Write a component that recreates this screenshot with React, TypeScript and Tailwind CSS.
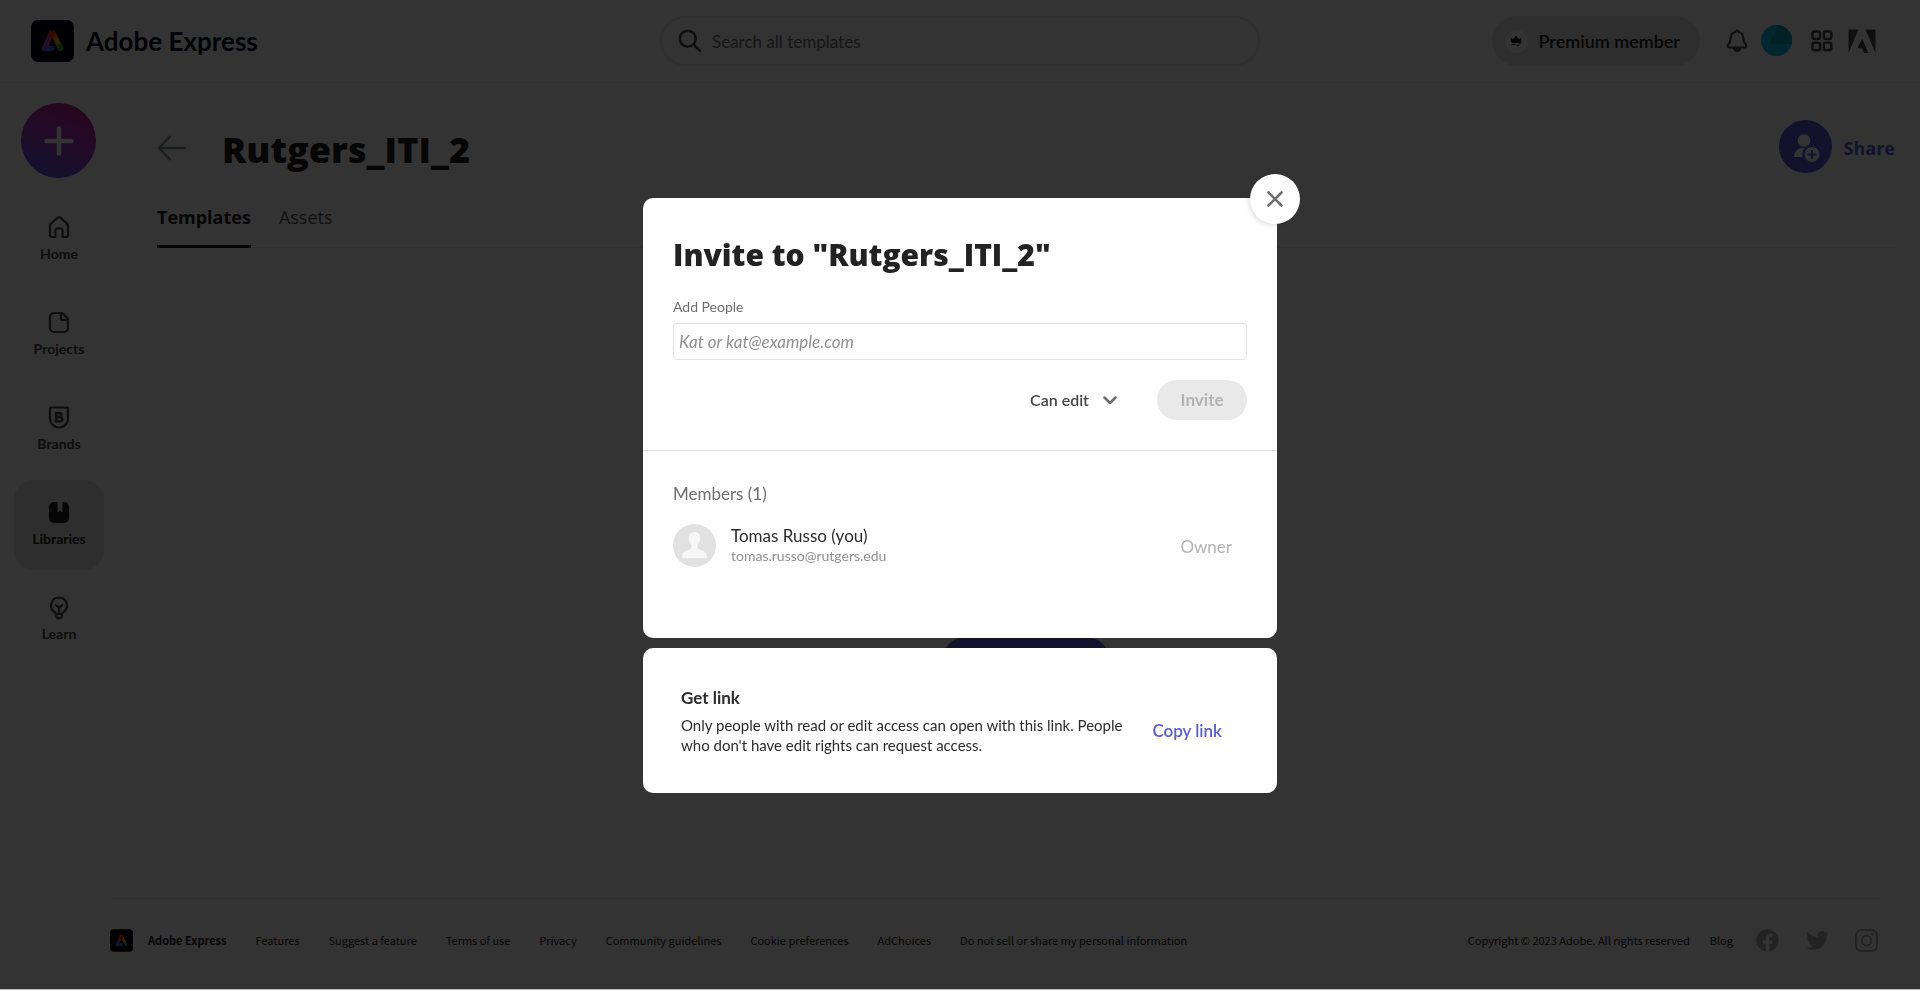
import type { ReactNode } from "react";
import { FaFacebook, FaTwitter } from "react-icons/fa";

const BODY = "font-[Lato,'Noto_Sans',sans-serif]";

function ExpressLogo({ className, id }: { className: string; id: string }) {
  return (
    <svg viewBox="0 0 43 42" className={className} aria-hidden="true">
      <defs>
        <linearGradient id={`${id}-left`} x1="0.7" y1="0" x2="0.2" y2="1">
          <stop offset="0" stopColor="#ff2a00" />
          <stop offset="0.4" stopColor="#d83bb0" />
          <stop offset="1" stopColor="#9a4dff" />
        </linearGradient>
        <linearGradient id={`${id}-right`} x1="0" y1="0" x2="0.3" y2="1">
          <stop offset="0" stopColor="#f01a00" />
          <stop offset="0.5" stopColor="#ffa000" />
          <stop offset="0.75" stopColor="#d8d000" />
          <stop offset="1" stopColor="#1fb53a" />
        </linearGradient>
        <linearGradient id={`${id}-foot`} x1="0" y1="0" x2="1" y2="0">
          <stop offset="0" stopColor="#8a4ff0" />
          <stop offset="1" stopColor="#1b6fe8" />
        </linearGradient>
      </defs>
      <rect width="43" height="42" rx="7" fill="#00020f" />
      <path d="M13.6 28.6 20.6 12.4" stroke={`url(#${id}-left)`} strokeWidth="5.2" strokeLinecap="round" />
      <path d="M13.6 26h6.6c1.600 0 2.800-.8 3.300 1.500 0 2-.9 3.700-3.300 3.700h-6.600a2.600 2.600 0 0 1 0-5.200z" fill={`url(#${id}-foot)`} />
      <path d="M21.800 12.300 29.600 28.500" stroke={`url(#${id}-right)`} strokeWidth="5.200" strokeLinecap="round" />
    </svg>
  );
}

const stroke = { fill: "none", stroke: "currentColor", strokeWidth: 2.2, strokeLinecap: "round", strokeLinejoin: "round" } as const;

const icons: Record<string, ReactNode> = {
  Home: <path {...stroke} d="M2 9.600c0-.8.3-1.500.9-2L9.700 1.700a2 2 0 0 1 2.600 0l6.800 5.900c.6.500.9 1.200.9 2V19a2 2 0 0 1-2 2h-3.400V14.500a2.200 2.200 0 0 0-2.200-2.200h-2.800a2.200 2.200 0 0 0-2.200 2.200V21H4a2 2 0 0 1-2-2z" />,
  Projects: (
    <g {...stroke}>
      <path d="M6 2h7.200c.8 0 1.500.3 2 .8L19.200 7c.5.500.8 1.200.8 2v8a4 4 0 0 1-4 4H6a4 4 0 0 1-4-4V6a4 4 0 0 1 4-4z" />
      <path d="M13 2.200V7.500A1.500 1.500 0 0 0 14.500 9H19.800" />
    </g>
  ),
  Brands: (
    <g {...stroke}>
      <path d="M3 1.500h16a1 1 0 0 1 1 1V12.500a9 9 0 0 1-18 0V2.500a1 1 0 0 1 1-1z" />
      <path strokeWidth="2.700" d="M8.200 7v8.500h3.800a2.200 2.200 0 0 0 0-4.500H8.500M8.200 7h3a2 2 0 0 1 0 4" />
    </g>
  ),
  Libraries: <path fill="currentColor" d="M6 1h3.500v9.500c0 .5.500.7.9.400l1.600-1.400 1.600 1.400c.4.300.9.1.9-.4V1H16a5 5 0 0 1 5 5v11a5 5 0 0 1-5 5H6a5 5 0 0 1-5-5V6a5 5 0 0 1 5-5z" />,
  Learn: (
    <g {...stroke}>
      <path d="M11 1.500a8 8 0 0 0-4.700 14.400c1 .8 1.900 1.800 1.900 3v.6a2.800 2.800 0 0 0 5.600 0v-.6c0-1.200.9-2.200 1.900-3A8 8 0 0 0 11 1.500z" />
      <path d="M7.800 9.200 11 11.600l3.200-2.400M11 11.600v6.400M8.600 18h4.800" />
    </g>
  ),
};

const footerLinks = ["Features", "Suggest a feature", "Terms of use", "Privacy", "Community guidelines", "Cookie preferences", "AdChoices", "Do not sell or share my personal information"];

function Header() {
  return (
    <header className="flex h-[83px] items-center justify-between border-b border-[#efefef] px-[31px]">
      <a href="#" className="flex flex-1 items-center gap-3 pr-[13px]">
        <ExpressLogo id="top" className="h-[42px] w-[43px]" />
        <span className="text-[26px] leading-8 font-bold text-[#000b1d]">Adobe Express</span>
      </a>
      <label className="flex h-[50px] w-[600px] items-center gap-[10px] rounded-full border-2 border-[#e9e9e9] pl-4">
        <svg viewBox="0 0 24 24" className="size-6 text-[#4b4b4b]" aria-hidden="true">
          <g fill="none" stroke="currentColor" strokeWidth="2.500" strokeLinecap="round">
            <circle cx="9.800" cy="9.800" r="8" />
            <path d="m15.700 15.700 6.300 6.300" />
          </g>
        </svg>
        <input type="search" aria-label="Search all templates" placeholder="Search all templates" className="flex-1 bg-transparent pt-0.5 text-[17px] outline-none placeholder:text-[#6e6e6e]" />
      </label>
      <div className="flex flex-1 items-center justify-end pr-[13px]">
        <button type="button" className="flex h-[50px] items-center gap-[11px] rounded-full bg-[#e6e6e6] pr-5 pl-[13px] text-[18px] font-semibold text-[#222]">
          <span className="flex size-[23px] items-center justify-center rounded-full bg-white">
            <svg viewBox="0 0 12 12" className="size-3" aria-hidden="true">
              <path fill="#222" d="m.5 2.500 2.500 1.700L6 .8l3 3.400 2.500-1.700-1 5.500h-9z" />
              <path fill="none" stroke="#222" d="M1.500 9.500h4" />
              <path fill="none" stroke="#2d9d78" strokeWidth="1.200" d="m6.500 9.500 1.500 1.300L11.500 7" />
            </svg>
          </span>
          Premium member
        </button>
        <button type="button" aria-label="Notifications" className="ml-[26px] text-[#4b4b4b]">
          <svg viewBox="0 0 22 24" className="h-6 w-[22px]">
            <path {...stroke} d="M11 1.700c-1 0-1.500.6-1.800 1.300C6.300 3.700 4.700 6 4.700 9c0 3.500-.9 5-2.600 7-.9 1.200-.3 2.500 1.100 2.500h15.600c1.400 0 2-1.300 1.100-2.500-1.700-2-2.600-3.500-2.600-7 0-3-1.600-5.300-4.500-6-.3-.7-.8-1.300-1.800-1.300z" />
            <path fill="currentColor" d="M7 19h8a4 4 0 0 1-8 0z" />
          </svg>
        </button>
        <button type="button" aria-label="Account" className="ml-[13px] pb-0.5">
          <svg viewBox="0 0 31 31" className="size-[31px]">
            <clipPath id="avatar"><circle cx="15.500" cy="15.500" r="15.500" /></clipPath>
            <g clipPath="url(#avatar)">
              <rect width="31" height="31" fill="#00c3e0" />
              <path d="M17 0h14v19H9z" fill="#00a3bd" />
            </g>
          </svg>
        </button>
        <button type="button" aria-label="Apps" className="ml-[19px] text-[#4b4b4b]">
          <svg viewBox="0 0 22 22" className="size-[22px]">
            <g {...stroke} strokeWidth="2.500">
              <rect x="1.500" y="1.500" width="7.500" height="7.500" rx="2" />
              <rect x="12.800" y="1.500" width="7.500" height="7.500" rx="2" />
              <rect x="1.500" y="12.800" width="7.500" height="7.500" rx="2" />
              <rect x="12.800" y="12.800" width="7.500" height="7.500" rx="2" />
            </g>
          </svg>
        </button>
        <a href="#" aria-label="Adobe" className="ml-[15px] text-[#4b4b4b]">
          <svg viewBox="0 0 28 24" className="h-6 w-7">
            <path fill="currentColor" d="M.5.500h10L.5 24zM17.500.500h10V24zM14 9.200 20.300 24H16l-1.900-4.700H9.500z" />
          </svg>
        </a>
      </div>
    </header>
  );
}

function Sidebar() {
  return (
    <nav aria-label="Main" className="flex w-[110px] shrink-0 flex-col pt-5 pl-[14px]">
      <button type="button" aria-label="Create" className="mb-[17px] ml-[7px] flex size-[75px] items-center justify-center rounded-full bg-[linear-gradient(25deg,#5258e4_5%,#b130bd_60%,#d0107a_100%)]">
        <svg viewBox="0 0 30 30" className="size-[30px]">
          <path d="M15 2.500v25M2.500 15h25" stroke="#fff" strokeWidth="4.500" strokeLinecap="round" />
        </svg>
      </button>
      <div className="flex flex-col gap-[5px]">
        {Object.keys(icons).map((name) => (
          <a
            key={name}
            href="#"
            aria-current={name === "Libraries" ? "page" : undefined}
            className={`flex size-[90px] flex-col items-center gap-1 rounded-[20px] pt-[21px] text-[14px] leading-5 font-bold ${name === "Libraries" ? "bg-[#e6e6e6] text-[#222]" : "text-[#464646]"}`}
          >
            <svg viewBox="0 0 22 24" className="h-6 w-[22px]" aria-hidden="true">{icons[name]}</svg>
            {name}
          </a>
        ))}
      </div>
    </nav>
  );
}

function Footer() {
  return (
    <footer className="mr-10 flex h-[93px] items-start justify-between border-t border-[#eaeaea] pt-[29px] font-['Noto_Sans_CJK_SC',sans-serif] text-[11px] leading-6 text-[#222]">
      <div className="flex items-center gap-[29px]">
        <a href="#" className="flex items-center gap-[15px] font-bold">
          <ExpressLogo id="bottom" className="size-[23px]" />
          Adobe Express
        </a>
        {footerLinks.map((text) => (
          <a key={text} href="#">{text}</a>
        ))}
      </div>
      <div className="flex items-center">
        <span>Copyright © 2023 Adobe. All rights reserved</span>
        <a href="#" className="ml-5">Blog</a>
        <a href="#" aria-label="Facebook" className="ml-[23px] text-[#b1b1b1]"><FaFacebook className="size-[23px]" /></a>
        <a href="#" aria-label="Twitter" className="ml-[27px] text-[#b1b1b1]"><FaTwitter className="size-[23px]" /></a>
        <a href="#" aria-label="Instagram" className="mr-0.5 ml-[26px] text-[#b1b1b1]">
          <svg viewBox="0 0 24 24" className="size-[23px]">
            <g fill="none" stroke="currentColor" strokeWidth="2.200">
              <rect x="1.100" y="1.100" width="21.800" height="21.800" rx="5.500" />
              <circle cx="12" cy="12" r="5" />
            </g>
            <circle cx="18.300" cy="5.700" r="1.500" fill="currentColor" />
          </svg>
        </a>
      </div>
    </footer>
  );
}

function Library() {
  return (
    <main className="flex flex-1 flex-col pr-[25px] pl-[47px] font-['Open_Sans',sans-serif]">
      <div className="flex h-[53px] items-center justify-between">
        <div className="flex items-center gap-9 pt-0.5">
          <a href="#" aria-label="Back" className="text-[#8a8f96]">
            <svg viewBox="0 0 29 28" className="h-7 w-[29px]">
              <path d="M29 14H2.500M13.500 2 2 14l11.500 12" fill="none" stroke="currentColor" strokeWidth="2.500" />
            </svg>
          </a>
          <h1 className="pt-1 text-[36px] leading-10 font-extrabold text-[#222]">Rutgers_ITI_2</h1>
        </div>
        <button type="button" className="flex items-center gap-3 text-[18px] font-bold text-[#5c5ce0]">
          <svg viewBox="0 0 53 53" className="size-[53px]" aria-hidden="true">
            <circle cx="26.500" cy="26.500" r="26.500" fill="#5c5ce0" />
            <circle cx="25" cy="20.500" r="6.300" fill="#fff" />
            <path d="M15 37c0-5 3.500-9 8.500-9h2.500a9.500 9.500 0 0 0-2.500 9z" fill="#fff" />
            <circle cx="33" cy="34.500" r="7.500" fill="#fff" />
            <path d="M33 30v9M28.500 34.500h9" stroke="#5c5ce0" strokeWidth="2" />
          </svg>
          <span className="pt-1">Share</span>
        </button>
      </div>
      <div role="tablist" className="flex h-[75px] items-end gap-7 border-b border-[#eaeaea] text-[18px]">
        <button type="button" role="tab" aria-selected="true" className="-mb-px h-[45px] border-b-[3px] border-[#222] pb-[14px] leading-7 font-bold text-[#222]">Templates</button>
        <button type="button" role="tab" aria-selected="false" className="-mb-px h-[45px] border-b-[3px] border-transparent pb-[14px] leading-7 text-[#5a5a5a]">Assets</button>
      </div>
      <div className="flex flex-1 flex-col items-center justify-end pb-[213px]">
        <button type="button" aria-label="Create new" className="h-12 w-[168px] rounded-full bg-[#5c5ce0]" />
      </div>
    </main>
  );
}

function InviteDialog() {
  return (
    <div role="dialog" aria-modal="true" aria-labelledby="invite-title" className="relative flex w-[634px] flex-col gap-[10px] text-[#2c2c2c]">
      <button type="button" aria-label="Close" className="absolute -top-6 -right-[23px] flex size-[50px] items-center justify-center rounded-full bg-white shadow-[-2px_2px_4px_rgba(0,0,0,0.1)]">
        <svg viewBox="0 0 16 16" className="size-4">
          <path d="m1.500 1.500 13 13M14.500 1.500l-13 13" stroke="#6e6e6e" strokeWidth="2.600" strokeLinecap="round" />
        </svg>
      </button>
      <div className="rounded-[10px] bg-white">
        <form className="border-b border-[#e1e1e1] px-[30px] pt-[37px] pb-[30px]" onSubmit={(e) => e.preventDefault()}>
          <h2 id="invite-title" className="font-['Open_Sans',sans-serif] text-[30px] leading-10 font-extrabold text-[#222]">Invite to "Rutgers_ITI_2"</h2>
          <label htmlFor="people" className="mt-[22px] block text-[14px] leading-5 text-[#6e6e6e]">Add People</label>
          <input id="people" type="text" placeholder="Kat or kat@example.com" className="mt-[6px] block h-[37px] w-full rounded-[4px] border border-[#e1e1e1] px-[5px] text-[17px] outline-none placeholder:text-[#909090] placeholder:italic" />
          <div className="mt-5 flex items-center justify-end gap-10">
            <div className="flex items-center gap-2">
              <select aria-label="Permission" className="appearance-none bg-transparent pr-[6px] text-[16px] font-semibold text-[#464646] outline-none">
                <option>Can edit</option>
              </select>
              <svg viewBox="0 0 14 9" className="h-[9px] w-[14px]" aria-hidden="true">
                <path d="m1.500 1.500 5.500 5.500 5.500-5.500" fill="none" stroke="#6e6e6e" strokeWidth="2.500" strokeLinecap="round" strokeLinejoin="round" />
              </svg>
            </div>
            <button type="submit" disabled className="h-10 w-[90px] rounded-full bg-[#e9e9e9] text-[17px] font-bold text-[#b3b3b3]">Invite</button>
          </div>
        </form>
        <section className="h-[187px] px-[30px] pt-[31px]">
          <h3 className="text-[17px] leading-6 text-[#6e6e6e]">Members (1)</h3>
          <div className="mt-[18px] flex items-center gap-[15px]">
            <svg viewBox="0 0 43 43" className="size-[43px]" aria-hidden="true">
              <circle cx="21.500" cy="21.500" r="21.500" fill="#e1e1e1" />
              <path fill="#f7f7f7" d="M21.500 8c-3.600 0-5.700 2.600-5.700 6.200 0 3 1.400 5.300 2.600 6.900.6.900.4 3.400-.6 4-3 1.300-8.500 2.400-8.800 7.400 0 1.300.3 1.800 1.300 1.800h22.400c1 0 1.300-.5 1.300-1.800-.3-5-5.800-6.100-8.800-7.400-1-.6-1.200-3.100-.6-4 1.200-1.600 2.600-3.900 2.600-6.900 0-3.600-2.100-6.200-5.700-6.200z" />
            </svg>
            <div className="flex-1">
              <p className="text-[17px] leading-[21px]">Tomas Russo (you)</p>
              <p className="text-[14px] leading-5 text-[#909090]">tomas.russo@rutgers.edu</p>
            </div>
            <span className="pt-[2px] pr-[15px] text-[17px] leading-6 text-[#b3b3b3]">Owner</span>
          </div>
        </section>
      </div>
      <section className="flex h-[145px] items-center justify-between rounded-[10px] bg-white pr-[55px] pl-[38px]">
        <div className="w-[450px]">
          <h3 className="text-[17px] leading-6 font-bold">Get link</h3>
          <p className="mt-[5px] text-[15px] leading-5">Only people with read or edit access can open with this link. People who don't have edit rights can request access.</p>
        </div>
        <button type="button" className="pt-[21px] text-[17px] font-semibold text-[#5c5ce0]">Copy link</button>
      </section>
    </div>
  );
}

export default function App() {
  return (
    <div className={`flex min-h-screen flex-col bg-white ${BODY}`}>
      <Header />
      <div className="flex flex-1">
        <Sidebar />
        <div className="flex flex-1 flex-col pt-[37px]">
          <Library />
          <Footer />
        </div>
      </div>
      <div className="fixed inset-x-0 top-0 bottom-px flex items-center justify-center border-b border-[#bbb] bg-black/80 pt-0.5">
        <InviteDialog />
      </div>
    </div>
  );
}
